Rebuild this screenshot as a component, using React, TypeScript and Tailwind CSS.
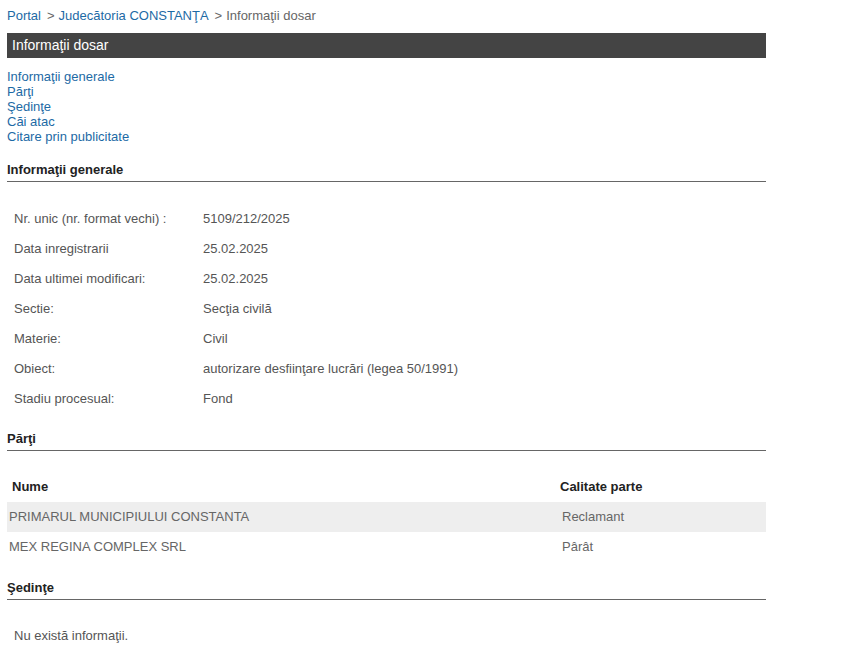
const links = [
	'Informaţii generale',
	'Părţi',
	'Şedinţe',
	'Căi atac',
	'Citare prin publicitate',
];

const details: [string, string][] = [
	['Nr. unic (nr. format vechi) :', '5109/212/2025'],
	['Data inregistrarii', '25.02.2025'],
	['Data ultimei modificari:', '25.02.2025'],
	['Sectie:', 'Secţia civilă'],
	['Materie:', 'Civil'],
	['Obiect:', 'autorizare desfiinţare lucrări (legea 50/1991)'],
	['Stadiu procesual:', 'Fond'],
];

const parti = [
	{ nume: 'PRIMARUL MUNICIPIULUI CONSTANTA', calitate: 'Reclamant' },
	{ nume: 'MEX REGINA COMPLEX SRL', calitate: 'Pârât' },
];

const SectionTitle = ({ title }: { title: string }) => (
	<div className="border-b border-[#666] pb-[3px] text-[13px] font-bold leading-[16px] text-[#222]">
		{title}
	</div>
);

export default function App() {
	return (
		<div className="min-h-[665px] bg-white font-['Liberation_Sans',Arial,sans-serif]">
			<div className="w-[759px] ml-[7px] pt-[8px]">
				{/* breadcrumb */}
				<div className="flex text-[13px] leading-[16px] text-[#666]">
					<a className="text-[#1d6aa5]">Portal</a>
					<span className="ml-[6px]">&gt;</span>
					<a className="ml-[4px] text-[#1d6aa5]">Judecătoria CONSTANŢA</a>
					<span className="ml-[6px]">&gt;</span>
					<span className="ml-[4px]">Informaţii dosar</span>
				</div>

				<div className="mt-[9px] h-[25px] bg-[#444] pl-[5px] text-[14px] leading-[25px] text-white">
					Informaţii dosar
				</div>

				<div className="mt-[11px] flex flex-col text-[13px] leading-[15px] text-[#1d6aa5]">
					{links.map((l) => (
						<a key={l}>{l}</a>
					))}
				</div>

				<div className="mt-[18px]">
					<SectionTitle title="Informaţii generale" />
				</div>

				<div className="mt-[22px] flex flex-col text-[13px] text-[#555]">
					{details.map(([label, value]) => (
						<div key={label} className="flex h-[30px] items-center">
							<div className="w-[196px] pl-[7px]">{label}</div>
							<div>{value}</div>
						</div>
					))}
				</div>

				<div className="mt-[17px]">
					<SectionTitle title="Părţi" />
				</div>

				<div className="mt-[20px] text-[13px]">
					<div className="flex h-[31px] items-center font-bold text-[#222]">
						<div className="w-[553px] pl-[5px]">Nume</div>
						<div>Calitate parte</div>
					</div>
					{parti.map((p, i) => (
						<div
							key={p.nume}
							className={`flex h-[30px] items-center text-[#666] ${
								i % 2 === 0 ? 'bg-[#eeeeee]' : ''
							}`}
						>
							<div className="w-[555px] pl-[2px]">{p.nume}</div>
							<div>{p.calitate}</div>
						</div>
					))}
				</div>

				<div className="mt-[18px]">
					<SectionTitle title="Şedinţe" />
				</div>

				<div className="mt-[26px] pl-[7px] text-[13px] text-[#555]">
					Nu există informaţii.
				</div>
			</div>
		</div>
	);
}
